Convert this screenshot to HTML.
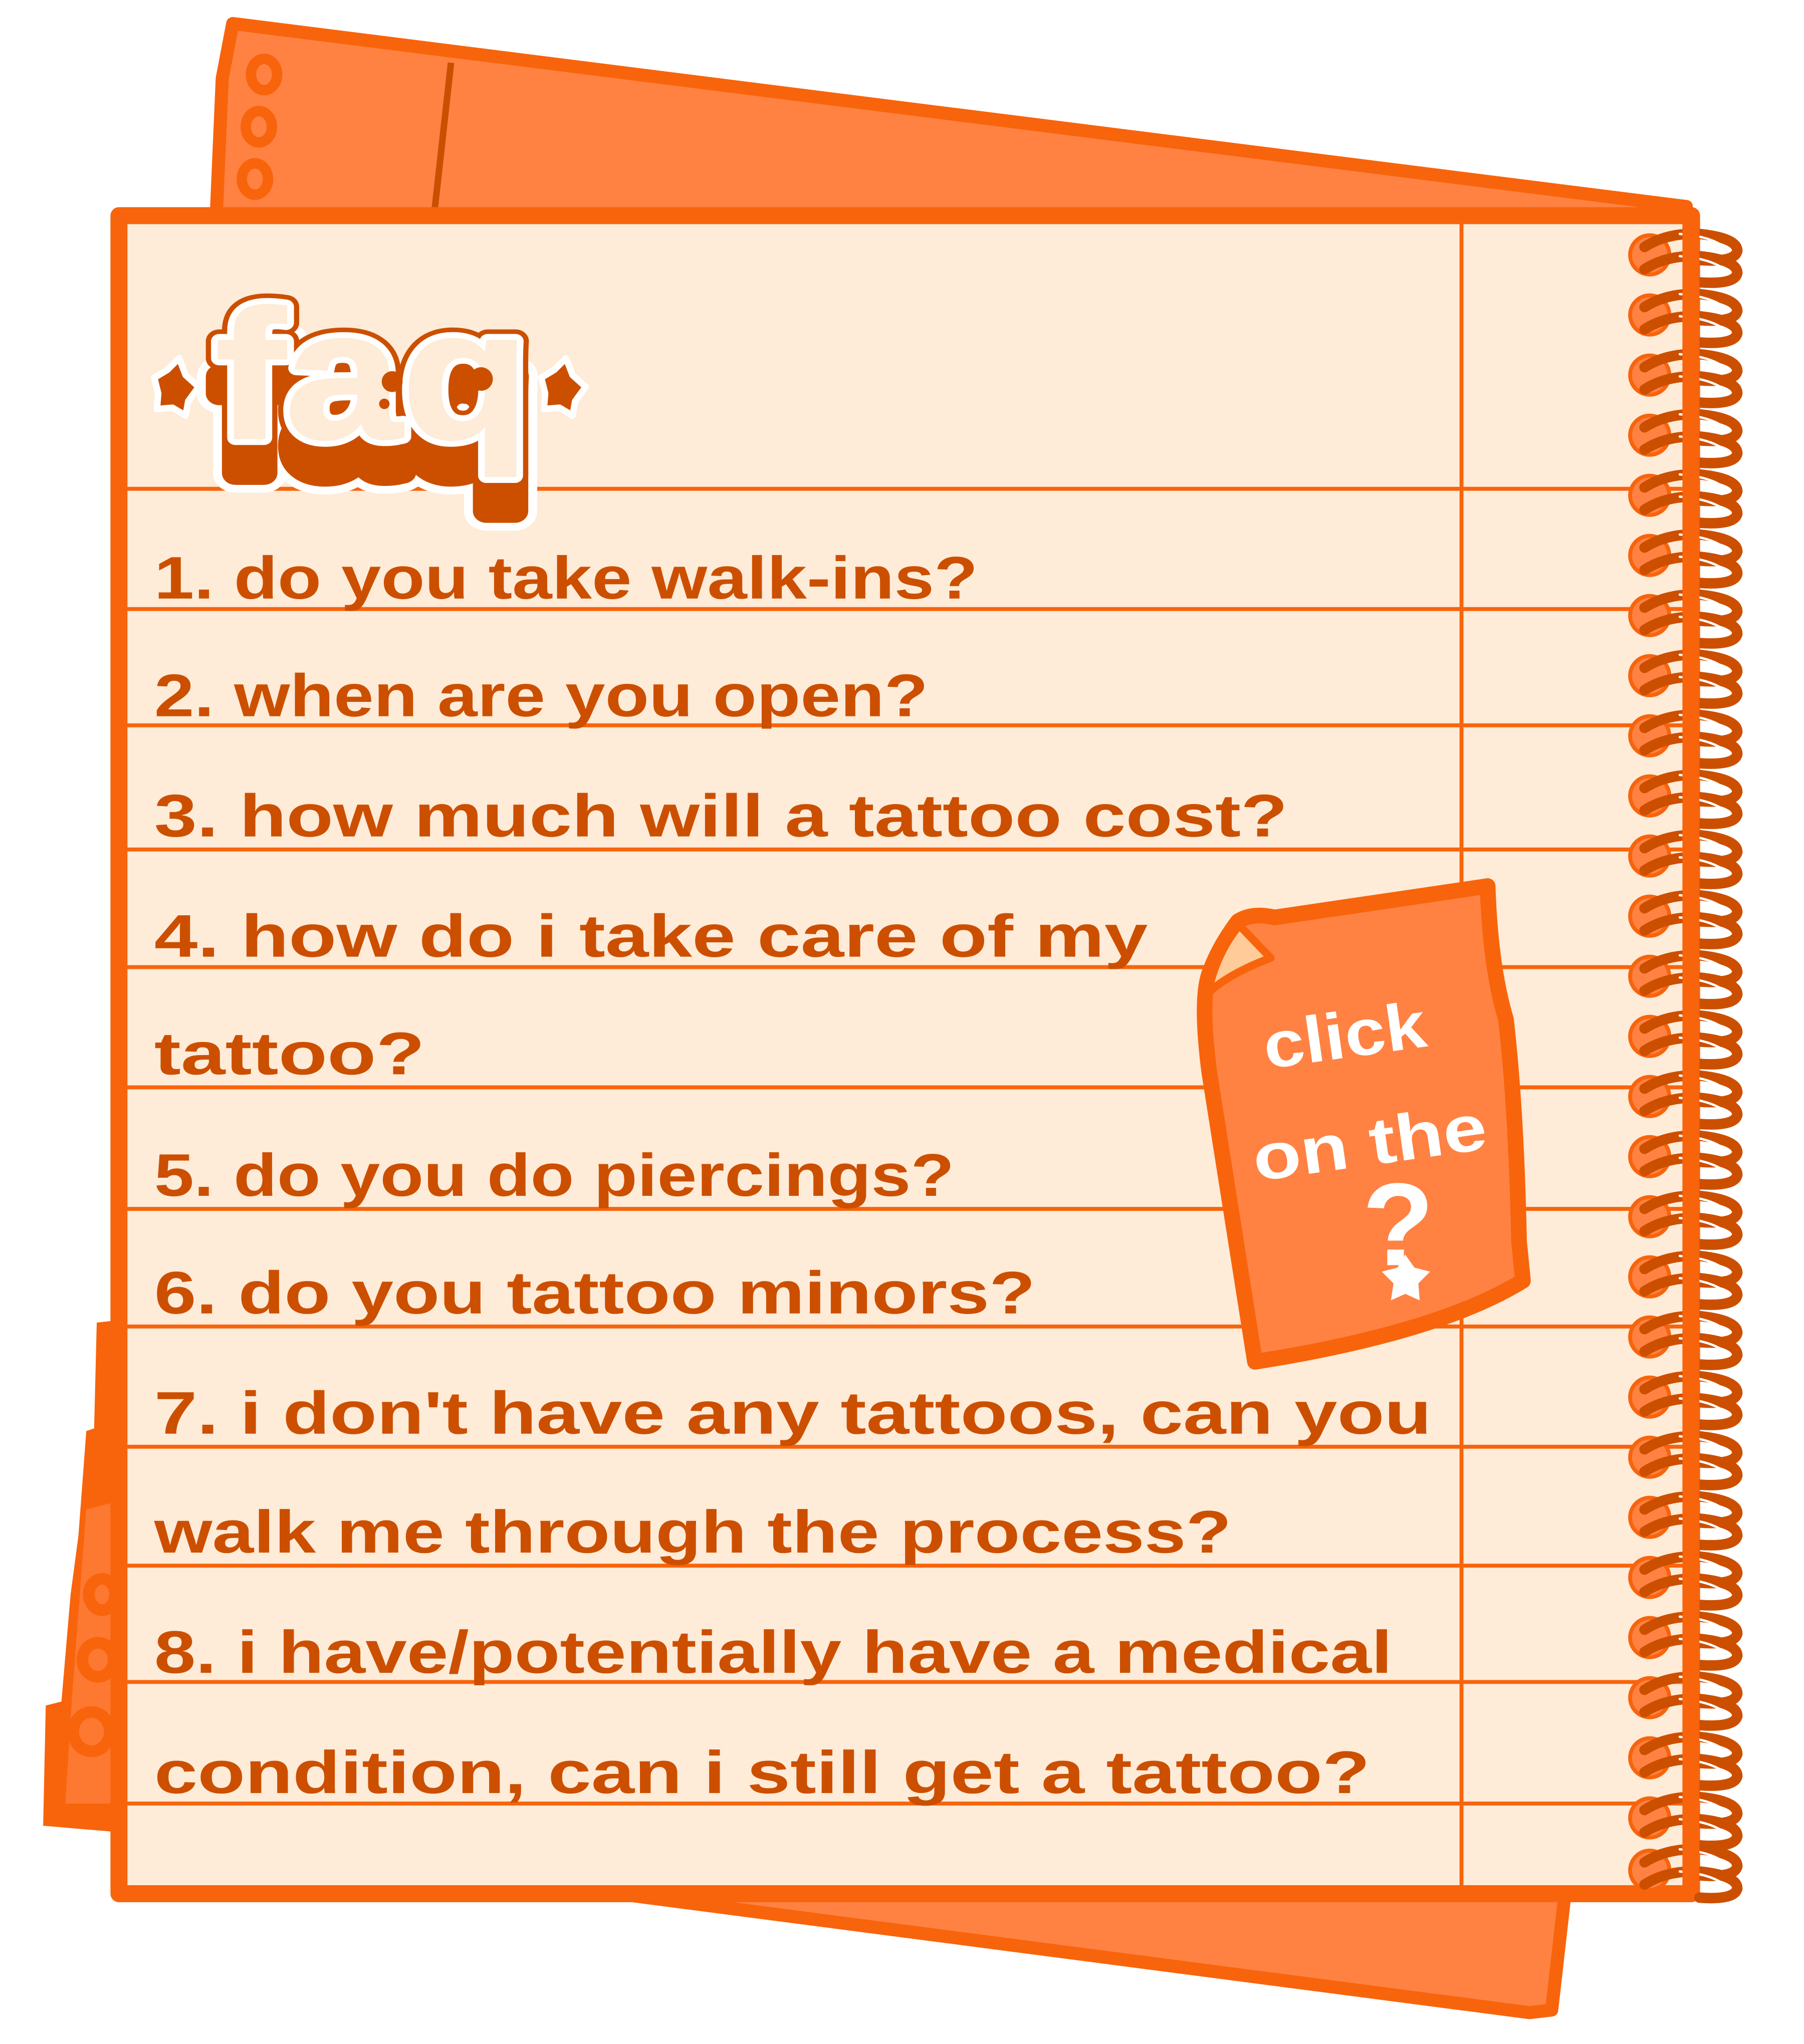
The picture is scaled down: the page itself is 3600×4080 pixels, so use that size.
<!DOCTYPE html>
<html><head><meta charset="utf-8"><style>
html,body{margin:0;padding:0;background:#fff;}
svg{display:block;}
text{font-family:"Liberation Sans","DejaVu Sans",sans-serif;font-weight:bold;}
</style></head><body>
<svg width="3600" height="4080" viewBox="0 0 1380 1564" xmlns="http://www.w3.org/2000/svg">
<defs>
<g id="coil">
<path d="M1258,8 Q1275,-3 1300,-2 Q1329,1 1329,11 Q1327,20 1300,18" fill="none" stroke="#CC4F00" stroke-width="8" stroke-linecap="round"/>
<path d="M1285,-2 Q1310,0 1320,9" fill="none" stroke="#fff" stroke-width="1.8" stroke-linecap="round"/>
</g>
<g id="pair">
<circle cx="1262" cy="8" r="15" fill="#FF8243" stroke="#F8640C" stroke-width="3"/>
<use href="#coil" y="-6"/>
<use href="#coil" y="11"/>
</g>
</defs>

<polygon points="178,18 1290,158 1290,175 165,175 170,60" fill="#FF8243" stroke="#F8640C" stroke-width="10" stroke-linejoin="round"/>
<line x1="345" y1="48" x2="332" y2="165" stroke="#CC4F00" stroke-width="5"/>
<g fill="none" stroke="#F8640C" stroke-width="8">
<ellipse cx="202" cy="57" rx="10" ry="12"/>
<ellipse cx="198" cy="97" rx="10" ry="12"/>
<ellipse cx="195" cy="137" rx="10" ry="12"/>
</g>

<polygon points="480,1450 1197,1450 1187,1538 1170,1540" fill="#FF8243" stroke="#F8640C" stroke-width="10" stroke-linejoin="round"/>

<polygon points="74,1012 92,1010 92,1402 33,1397 35,1305 47,1302 54,1220 60,1175 66,1095 72,1093" fill="#F8640C"/>
<polygon points="66,1155 85,1150 85,1380 50,1380 55,1300" fill="#FF8243" opacity="0.7"/>
<g fill="none" stroke="#F8640C" stroke-width="9">
<ellipse cx="70" cy="1325" rx="14" ry="15"/>
<ellipse cx="75" cy="1270" rx="12" ry="13"/>
<ellipse cx="78" cy="1220" rx="10" ry="12"/>
</g>

<rect x="91" y="165" width="1203" height="1284" fill="#FEEBD8" stroke="#F8640C" stroke-width="13" stroke-linejoin="round"/>
<g stroke="#F8640C" stroke-width="3">
<line x1="1118" y1="170" x2="1118" y2="1444"/>
<line x1="97" y1="374" x2="1288" y2="374"/>
<line x1="97" y1="466" x2="1288" y2="466"/>
<line x1="97" y1="555" x2="1288" y2="555"/>
<line x1="97" y1="650" x2="1288" y2="650"/>
<line x1="97" y1="740" x2="1288" y2="740"/>
<line x1="97" y1="832" x2="1288" y2="832"/>
<line x1="97" y1="925" x2="1288" y2="925"/>
<line x1="97" y1="1015" x2="1288" y2="1015"/>
<line x1="97" y1="1107" x2="1288" y2="1107"/>
<line x1="97" y1="1198" x2="1288" y2="1198"/>
<line x1="97" y1="1287" x2="1288" y2="1287"/>
<line x1="97" y1="1380" x2="1288" y2="1380"/>
</g>

<g>
<use href="#pair" y="187"/><use href="#pair" y="233"/><use href="#pair" y="279"/><use href="#pair" y="325"/>
<use href="#pair" y="371"/><use href="#pair" y="417"/><use href="#pair" y="463"/><use href="#pair" y="509"/>
<use href="#pair" y="555"/><use href="#pair" y="601"/><use href="#pair" y="647"/><use href="#pair" y="693"/>
<use href="#pair" y="739"/><use href="#pair" y="785"/><use href="#pair" y="831"/><use href="#pair" y="877"/>
<use href="#pair" y="923"/><use href="#pair" y="969"/><use href="#pair" y="1015"/><use href="#pair" y="1061"/>
<use href="#pair" y="1107"/><use href="#pair" y="1153"/><use href="#pair" y="1199"/><use href="#pair" y="1245"/>
<use href="#pair" y="1291"/><use href="#pair" y="1337"/><use href="#pair" y="1383"/><use href="#pair" y="1423"/>
</g>
<rect x="1287" y="168" width="13" height="1278" fill="#F8640C"/>

<!-- FAQ logo -->
<g stroke-linejoin="round" stroke-linecap="round">
<polygon points="128,283 137,274 142,287 152,296 144,307 142,318 132,312 120,313 121,301 118,289" fill="#CC4F00" stroke="#fff" stroke-width="5"/>
<polygon points="424,283 433,274 438,287 448,296 440,307 438,318 428,312 416,313 417,301 414,289" fill="#CC4F00" stroke="#fff" stroke-width="5"/>
<text x="165" y="362" font-size="140" fill="#CC4F00" stroke="#fff" stroke-width="30" paint-order="stroke" textLength="240" lengthAdjust="spacingAndGlyphs">faq</text>
<text x="165" y="362" font-size="140" fill="#CC4F00" stroke="#CC4F00" stroke-width="18" textLength="240" lengthAdjust="spacingAndGlyphs">faq</text>
<text x="165" y="335" font-size="140" fill="#CC4F00" stroke="#CC4F00" stroke-width="18" textLength="240" lengthAdjust="spacingAndGlyphs">faq</text>
<text x="165" y="335" font-size="140" fill="#fff" stroke="#fff" stroke-width="11" textLength="240" lengthAdjust="spacingAndGlyphs">faq</text>
<text x="165" y="335" font-size="140" fill="#FEEBD8" stroke="#FEEBD8" stroke-width="2" textLength="240" lengthAdjust="spacingAndGlyphs">faq</text>
<circle cx="300" cy="292" r="8" fill="#CC4F00"/><circle cx="294" cy="309" r="4" fill="#CC4F00"/>
<circle cx="368" cy="290" r="9" fill="#CC4F00"/><circle cx="356" cy="304" r="5" fill="#CC4F00"/>
</g>

<g fill="#CC4F00" font-size="46">
<text x="118" y="458" textLength="630" lengthAdjust="spacingAndGlyphs">1. do you take walk-ins?</text>
<text x="118" y="548" textLength="592" lengthAdjust="spacingAndGlyphs">2. when are you open?</text>
<text x="118" y="640" textLength="867" lengthAdjust="spacingAndGlyphs">3. how much will a tattoo cost?</text>
<text x="118" y="732" textLength="760" lengthAdjust="spacingAndGlyphs">4. how do i take care of my</text>
<text x="118" y="822" textLength="207" lengthAdjust="spacingAndGlyphs">tattoo?</text>
<text x="118" y="915" textLength="612" lengthAdjust="spacingAndGlyphs">5. do you do piercings?</text>
<text x="118" y="1005" textLength="674" lengthAdjust="spacingAndGlyphs">6. do you tattoo minors?</text>
<text x="118" y="1097" textLength="977" lengthAdjust="spacingAndGlyphs">7. i don't have any tattoos, can you</text>
<text x="118" y="1188" textLength="824" lengthAdjust="spacingAndGlyphs">walk me through the process?</text>
<text x="118" y="1280" textLength="947" lengthAdjust="spacingAndGlyphs">8. i have/potentially have a medical</text>
<text x="118" y="1372" textLength="930" lengthAdjust="spacingAndGlyphs">condition, can i still get a tattoo?</text>
</g>

<g>
<path d="M947,705 Q958,698 975,702 L1138,678 Q1140,740 1152,780 Q1160,850 1162,950 L1165,980 Q1100,1020 960,1042 Q945,950 925,820 Q918,765 925,745 Q932,725 947,705 Z" fill="#FF8243" stroke="#F8640C" stroke-width="12" stroke-linejoin="round"/>
<path d="M948,708 L972,733 Q940,745 924,760 Q930,730 948,708 Z" fill="#FFCB98" stroke="#F8640C" stroke-width="6" stroke-linejoin="round"/>
<g fill="#fff" font-size="50" transform="rotate(-8 1040 820)">
<text x="970" y="808" textLength="125" lengthAdjust="spacingAndGlyphs">click</text>
<text x="950" y="892" textLength="180" lengthAdjust="spacingAndGlyphs">on the</text>
</g>
<text x="1042" y="968" font-size="90" fill="#fff">?</text>
<polygon points="1075,960 1082,970 1094,973 1085,982 1086,995 1075,990 1064,995 1066,982 1057,973 1069,970" fill="#fff"/>
</g>
</svg>
</body></html>
